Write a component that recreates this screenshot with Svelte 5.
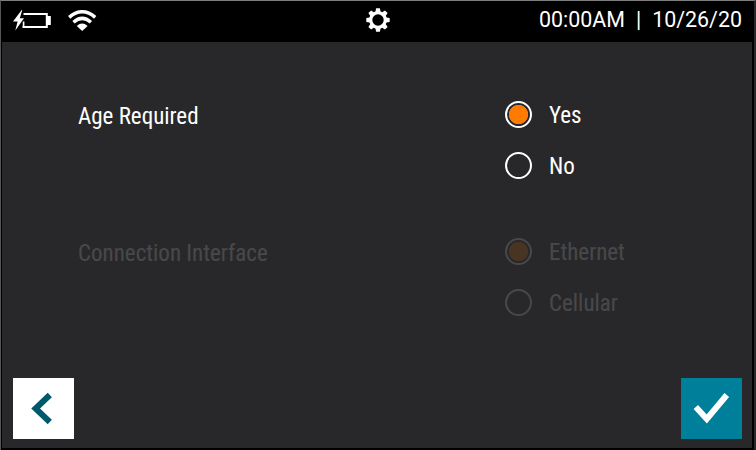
<script lang="ts">
	interface Setting {
		name: string;
		label: string;
		options: string[];
		selected: string;
		disabled: boolean;
	}

	let settings = $state<Setting[]>([
		{
			name: 'age',
			label: 'Age Required',
			options: ['Yes', 'No'],
			selected: 'Yes',
			disabled: false
		},
		{
			name: 'connection',
			label: 'Connection Interface',
			options: ['Ethernet', 'Cellular'],
			selected: 'Ethernet',
			disabled: true
		}
	]);

	const time = '00:00AM';
	const date = '10/26/20';
	const teeth = [0, 45, 90, 135, 180, 225, 270, 315];
</script>

<div class="screen">
	<header class="status-bar">
		<div class="indicators">
			<svg class="battery" width="38" height="22" viewBox="0 0 38 22" aria-label="Battery charging">
				<path d="M10.5 4H33.8V17H9.5" fill="none" stroke="#fff" stroke-width="2" />
				<path d="M10.6 11.5V17" stroke="#fff" stroke-width="1.6" />
				<rect x="33.5" y="6" width="4.3" height="9" fill="#fff" />
				<path d="M8.7 0L0 11.5H4.6L2.3 20.5L11 8.2H6.8L9.3 0Z" fill="#fff" />
			</svg>
			<svg class="wifi" width="29" height="22" viewBox="0 0 29 22" aria-label="Wi-Fi">
				<path d="M1.2 7.3Q14.2 -3.8 27.2 7.3" fill="none" stroke="#fff" stroke-width="3.5" />
				<path d="M5.5 12.2Q14.2 4.6 22.9 12.2" fill="none" stroke="#fff" stroke-width="3.5" />
				<path d="M8.8 15.9Q14.2 11 19.6 15.9L14.2 21Z" fill="#fff" />
			</svg>
		</div>
		<svg class="gear" width="24" height="24" viewBox="-12 -12 24 24" aria-label="Settings">
			<circle r="7.3" fill="none" stroke="#fff" stroke-width="3.2" />
			{#each teeth as angle}
				<path d="M-2.6 -8L-1.9 -11.7H1.9L2.6 -8Z" fill="#fff" transform="rotate({angle})" />
			{/each}
		</svg>
		<div class="clock">
			<span>{time}</span>
			<span>|</span>
			<span>{date}</span>
		</div>
	</header>

	<main class="settings">
		{#each settings as setting}
			<section class="setting" class:disabled={setting.disabled}>
				<h2>{setting.label}</h2>
				<div class="options">
					{#each setting.options as option}
						<label class="option">
							<input
								type="radio"
								name={setting.name}
								value={option}
								disabled={setting.disabled}
								bind:group={setting.selected}
							/>
							<span>{option}</span>
						</label>
					{/each}
				</div>
			</section>
		{/each}
	</main>

	<footer class="actions">
		<button class="back" aria-label="Back">
			<svg width="61" height="61" viewBox="0 0 61 61">
				<path d="M36.8 17L22.6 30.5L36.8 44" fill="none" stroke="#00586b" stroke-width="6" />
			</svg>
		</button>
		<button class="confirm" aria-label="Confirm">
			<svg width="61" height="61" viewBox="0 0 61 61">
				<path d="M14.8 29L25.8 41L45.8 17" fill="none" stroke="#fff" stroke-width="6" />
			</svg>
		</button>
	</footer>
</div>

<style>
	:global(body) {
		background: #000;
	}

	.screen {
		box-sizing: border-box;
		display: flex;
		flex-direction: column;
		width: 756px;
		height: 450px;
		border-top: 1px solid #7d7d7d;
		border-left: 1px solid #555;
		border-right: 2px solid #28282a;
		background: #000;
		color: #fff;
		font-family: 'Roboto Condensed', Roboto, sans-serif;
		overflow: hidden;
	}

	.status-bar {
		display: grid;
		grid-template-columns: 1fr auto 1fr;
		align-items: start;
		box-sizing: border-box;
		flex: none;
		height: 41px;
		padding: 7px 12px 0 12px;
	}

	.indicators {
		display: flex;
		gap: 17px;
		padding-top: 2px;
	}

	.clock {
		display: flex;
		justify-content: flex-end;
		gap: 11px;
		padding-top: 1px;
		font-family: Roboto, sans-serif;
		font-size: 21.4px;
		line-height: 21px;
	}

	.settings {
		flex: 1;
		margin: 0 2px 0 1px;
		padding: 59px 76px 0;
		background: #28282a;
	}

	.setting {
		display: flex;
		height: 137px;
	}

	.setting.disabled {
		opacity: 0.15;
	}

	h2 {
		width: 427px;
		margin: 0;
		font-size: 23px;
		font-weight: 400;
		line-height: 32px;
	}

	.options {
		display: flex;
		flex-direction: column;
		gap: 24px;
	}

	.option {
		display: flex;
		align-items: center;
		gap: 17px;
		height: 27px;
		font-size: 23px;
	}

	.option span {
		padding-top: 2px;
		line-height: 27px;
	}

	input {
		appearance: none;
		box-sizing: border-box;
		width: 27px;
		height: 27px;
		margin: 0;
		border: 2px solid #fff;
		border-radius: 50%;
	}

	input:checked {
		background: radial-gradient(circle, #ff7b00 9.3px, transparent 10px);
	}

	.actions {
		display: flex;
		flex: none;
		justify-content: space-between;
		margin: 0 2px 2px 1px;
		padding: 0 10px 9px 11px;
		background: #28282a;
	}

	button {
		width: 61px;
		height: 61px;
		padding: 0;
		border: none;
	}

	button svg {
		display: block;
	}

	.back {
		background: #fff;
	}

	.confirm {
		background: #007f9b;
	}
</style>
